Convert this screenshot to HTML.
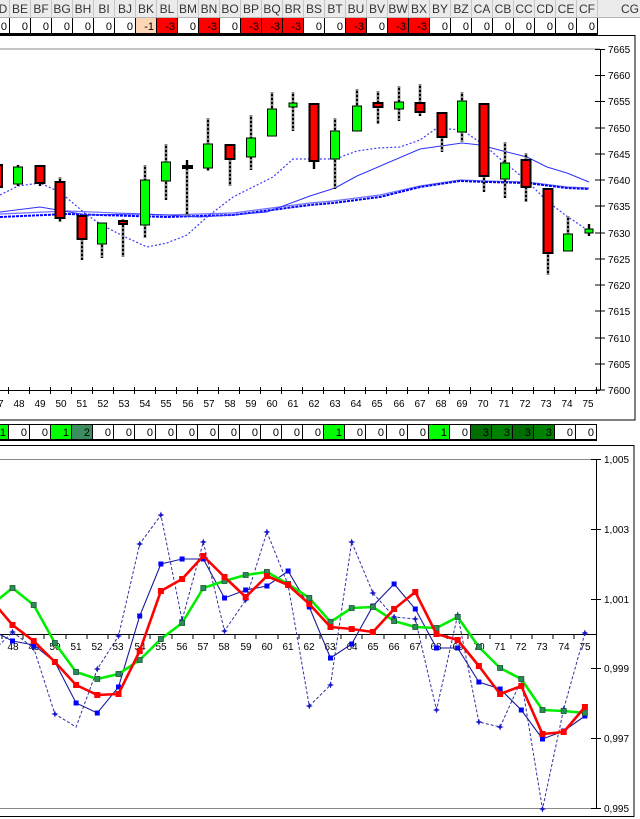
<!DOCTYPE html>
<html><head><meta charset="utf-8"><style>
html,body{margin:0;padding:0;background:#fff;width:640px;height:819px;overflow:hidden}
svg{display:block}
text{font-family:"Liberation Sans",Arial,sans-serif}
.h{font-size:12px;fill:#333;text-anchor:middle}
.v{font-size:11px;fill:#000;text-anchor:end}
.ax{font-size:10px;fill:#000}
.xl{font-size:10px;fill:#000;text-anchor:middle}
.w{stroke:#000;stroke-width:2.4}
.wd{stroke:#fff;stroke-width:1;stroke-dasharray:2 2}
.g{fill:#00ff00;stroke:#000;stroke-width:1}
.r{fill:#ff0000;stroke:#000;stroke-width:2}
.k{fill:#000}
</style></head><body>
<svg width="640" height="819" viewBox="0 0 640 819" xmlns="http://www.w3.org/2000/svg">
<!-- header row -->
<rect x="0" y="0" width="640" height="18" fill="#ebebeb"/>
<line x1="0" y1="17.5" x2="640" y2="17.5" stroke="#b4b4b4"/>
<g stroke="#c6c6c6">
<line x1="9.5" y1="0" x2="9.5" y2="18"/><line x1="30.5" y1="0" x2="30.5" y2="18"/><line x1="51.5" y1="0" x2="51.5" y2="18"/><line x1="72.5" y1="0" x2="72.5" y2="18"/><line x1="93.5" y1="0" x2="93.5" y2="18"/><line x1="114.5" y1="0" x2="114.5" y2="18"/><line x1="135.5" y1="0" x2="135.5" y2="18"/><line x1="156.5" y1="0" x2="156.5" y2="18"/><line x1="177.5" y1="0" x2="177.5" y2="18"/><line x1="198.5" y1="0" x2="198.5" y2="18"/><line x1="219.5" y1="0" x2="219.5" y2="18"/><line x1="240.5" y1="0" x2="240.5" y2="18"/><line x1="261.5" y1="0" x2="261.5" y2="18"/><line x1="282.5" y1="0" x2="282.5" y2="18"/><line x1="303.5" y1="0" x2="303.5" y2="18"/><line x1="324.5" y1="0" x2="324.5" y2="18"/><line x1="345.5" y1="0" x2="345.5" y2="18"/><line x1="366.5" y1="0" x2="366.5" y2="18"/><line x1="387.5" y1="0" x2="387.5" y2="18"/><line x1="408.5" y1="0" x2="408.5" y2="18"/><line x1="429.5" y1="0" x2="429.5" y2="18"/><line x1="450.5" y1="0" x2="450.5" y2="18"/><line x1="471.5" y1="0" x2="471.5" y2="18"/><line x1="492.5" y1="0" x2="492.5" y2="18"/><line x1="513.5" y1="0" x2="513.5" y2="18"/><line x1="534.5" y1="0" x2="534.5" y2="18"/><line x1="555.5" y1="0" x2="555.5" y2="18"/><line x1="576.5" y1="0" x2="576.5" y2="18"/><line x1="597.5" y1="0" x2="597.5" y2="18"/>
</g>
<text class="h" x="3" y="13">D</text><text class="h" x="20" y="13">BE</text><text class="h" x="41" y="13">BF</text><text class="h" x="62" y="13">BG</text><text class="h" x="83" y="13">BH</text><text class="h" x="104" y="13">BI</text><text class="h" x="125" y="13">BJ</text><text class="h" x="146" y="13">BK</text><text class="h" x="167" y="13">BL</text><text class="h" x="188" y="13">BM</text><text class="h" x="209" y="13">BN</text><text class="h" x="230" y="13">BO</text><text class="h" x="251" y="13">BP</text><text class="h" x="272" y="13">BQ</text><text class="h" x="293" y="13">BR</text><text class="h" x="314" y="13">BS</text><text class="h" x="335" y="13">BT</text><text class="h" x="356" y="13">BU</text><text class="h" x="377" y="13">BV</text><text class="h" x="398" y="13">BW</text><text class="h" x="419" y="13">BX</text><text class="h" x="440" y="13">BY</text><text class="h" x="461" y="13">BZ</text><text class="h" x="482" y="13">CA</text><text class="h" x="503" y="13">CB</text><text class="h" x="524" y="13">CC</text><text class="h" x="545" y="13">CD</text><text class="h" x="566" y="13">CE</text><text class="h" x="587" y="13">CF</text><text class="h" x="630" y="13">CG</text>
<!-- value row 1 -->
<rect x="135" y="18" width="21" height="16" fill="#fcd5b4"/>
<g fill="#ff0000"><rect x="156" y="18" width="21" height="16"/><rect x="198" y="18" width="21" height="16"/><rect x="240" y="18" width="63" height="16"/><rect x="345" y="18" width="21" height="16"/><rect x="387" y="18" width="42" height="16"/></g>
<g stroke="#000"><line x1="9.5" y1="18" x2="9.5" y2="34"/><line x1="30.5" y1="18" x2="30.5" y2="34"/><line x1="51.5" y1="18" x2="51.5" y2="34"/><line x1="72.5" y1="18" x2="72.5" y2="34"/><line x1="93.5" y1="18" x2="93.5" y2="34"/><line x1="114.5" y1="18" x2="114.5" y2="34"/><line x1="135.5" y1="18" x2="135.5" y2="34"/><line x1="156.5" y1="18" x2="156.5" y2="34"/><line x1="177.5" y1="18" x2="177.5" y2="34"/><line x1="198.5" y1="18" x2="198.5" y2="34"/><line x1="219.5" y1="18" x2="219.5" y2="34"/><line x1="240.5" y1="18" x2="240.5" y2="34"/><line x1="261.5" y1="18" x2="261.5" y2="34"/><line x1="282.5" y1="18" x2="282.5" y2="34"/><line x1="303.5" y1="18" x2="303.5" y2="34"/><line x1="324.5" y1="18" x2="324.5" y2="34"/><line x1="345.5" y1="18" x2="345.5" y2="34"/><line x1="366.5" y1="18" x2="366.5" y2="34"/><line x1="387.5" y1="18" x2="387.5" y2="34"/><line x1="408.5" y1="18" x2="408.5" y2="34"/><line x1="429.5" y1="18" x2="429.5" y2="34"/><line x1="450.5" y1="18" x2="450.5" y2="34"/><line x1="471.5" y1="18" x2="471.5" y2="34"/><line x1="492.5" y1="18" x2="492.5" y2="34"/><line x1="513.5" y1="18" x2="513.5" y2="34"/><line x1="534.5" y1="18" x2="534.5" y2="34"/><line x1="555.5" y1="18" x2="555.5" y2="34"/><line x1="576.5" y1="18" x2="576.5" y2="34"/><line x1="597.5" y1="18" x2="597.5" y2="34"/></g>
<text class="v" x="7" y="30">0</text><text class="v" x="28" y="30">0</text><text class="v" x="49" y="30">0</text><text class="v" x="70" y="30">0</text><text class="v" x="91" y="30">0</text><text class="v" x="112" y="30">0</text><text class="v" x="133" y="30">0</text><text class="v" x="154" y="30">-1</text><text class="v" x="175" y="30">-3</text><text class="v" x="196" y="30">0</text><text class="v" x="217" y="30">-3</text><text class="v" x="238" y="30">0</text><text class="v" x="259" y="30">-3</text><text class="v" x="280" y="30">-3</text><text class="v" x="301" y="30">-3</text><text class="v" x="322" y="30">0</text><text class="v" x="343" y="30">0</text><text class="v" x="364" y="30">-3</text><text class="v" x="385" y="30">0</text><text class="v" x="406" y="30">-3</text><text class="v" x="427" y="30">-3</text><text class="v" x="448" y="30">0</text><text class="v" x="469" y="30">0</text><text class="v" x="490" y="30">0</text><text class="v" x="511" y="30">0</text><text class="v" x="532" y="30">0</text><text class="v" x="553" y="30">0</text><text class="v" x="574" y="30">0</text><text class="v" x="595" y="30">0</text>
<rect x="0" y="33" width="598" height="2.5" fill="#000"/>

<!-- chart 1 frame -->
<rect x="-2" y="35.5" width="637" height="384.5" fill="none" stroke="#000" stroke-width="1"/>
<line x1="0" y1="49" x2="600" y2="49" stroke="#888"/>
<line x1="600.5" y1="49" x2="600.5" y2="390" stroke="#000"/>
<line x1="0" y1="390.5" x2="600" y2="390.5" stroke="#000"/>
<g stroke="#000">
<line x1="595" y1="49.5" x2="605" y2="49.5"/><line x1="595" y1="75.5" x2="605" y2="75.5"/><line x1="595" y1="101.5" x2="605" y2="101.5"/><line x1="595" y1="128" x2="605" y2="128"/><line x1="595" y1="154" x2="605" y2="154"/><line x1="595" y1="180" x2="605" y2="180"/><line x1="595" y1="206" x2="605" y2="206"/><line x1="595" y1="233" x2="605" y2="233"/><line x1="595" y1="259" x2="605" y2="259"/><line x1="595" y1="285" x2="605" y2="285"/><line x1="595" y1="311" x2="605" y2="311"/><line x1="595" y1="338" x2="605" y2="338"/><line x1="595" y1="364" x2="605" y2="364"/><line x1="595" y1="390" x2="605" y2="390"/>
<line x1="8.5" y1="387" x2="8.5" y2="394"/><line x1="29.5" y1="387" x2="29.5" y2="394"/><line x1="50.5" y1="387" x2="50.5" y2="394"/><line x1="71.5" y1="387" x2="71.5" y2="394"/><line x1="92.5" y1="387" x2="92.5" y2="394"/><line x1="113.5" y1="387" x2="113.5" y2="394"/><line x1="134.5" y1="387" x2="134.5" y2="394"/><line x1="155.5" y1="387" x2="155.5" y2="394"/><line x1="176.5" y1="387" x2="176.5" y2="394"/><line x1="197.5" y1="387" x2="197.5" y2="394"/><line x1="218.5" y1="387" x2="218.5" y2="394"/><line x1="239.5" y1="387" x2="239.5" y2="394"/><line x1="260.5" y1="387" x2="260.5" y2="394"/><line x1="281.5" y1="387" x2="281.5" y2="394"/><line x1="302.5" y1="387" x2="302.5" y2="394"/><line x1="323.5" y1="387" x2="323.5" y2="394"/><line x1="344.5" y1="387" x2="344.5" y2="394"/><line x1="365.5" y1="387" x2="365.5" y2="394"/><line x1="386.5" y1="387" x2="386.5" y2="394"/><line x1="407.5" y1="387" x2="407.5" y2="394"/><line x1="428.5" y1="387" x2="428.5" y2="394"/><line x1="449.5" y1="387" x2="449.5" y2="394"/><line x1="470.5" y1="387" x2="470.5" y2="394"/><line x1="491.5" y1="387" x2="491.5" y2="394"/><line x1="512.5" y1="387" x2="512.5" y2="394"/><line x1="533.5" y1="387" x2="533.5" y2="394"/><line x1="554.5" y1="387" x2="554.5" y2="394"/><line x1="575.5" y1="387" x2="575.5" y2="394"/><line x1="596.5" y1="387" x2="596.5" y2="394"/>
</g>
<g class="ax"><text x="608" y="53">7665</text><text x="608" y="79">7660</text><text x="608" y="105">7655</text><text x="608" y="132">7650</text><text x="608" y="158">7645</text><text x="608" y="184">7640</text><text x="608" y="210">7635</text><text x="608" y="237">7630</text><text x="608" y="263">7625</text><text x="608" y="289">7620</text><text x="608" y="315">7615</text><text x="608" y="342">7610</text><text x="608" y="368">7605</text><text x="608" y="394">7600</text></g>
<g class="xl"><text x="-2" y="407">47</text><text x="19" y="407">48</text><text x="40" y="407">49</text><text x="61" y="407">50</text><text x="82" y="407">51</text><text x="103" y="407">52</text><text x="124" y="407">53</text><text x="145" y="407">54</text><text x="166" y="407">55</text><text x="188" y="407">56</text><text x="209" y="407">57</text><text x="230" y="407">58</text><text x="251" y="407">59</text><text x="272" y="407">60</text><text x="293" y="407">61</text><text x="314" y="407">62</text><text x="335" y="407">63</text><text x="356" y="407">64</text><text x="377" y="407">65</text><text x="399" y="407">66</text><text x="420" y="407">67</text><text x="441" y="407">68</text><text x="462" y="407">69</text><text x="483" y="407">70</text><text x="504" y="407">71</text><text x="525" y="407">72</text><text x="546" y="407">73</text><text x="567" y="407">74</text><text x="588" y="407">75</text></g>

<!-- MA lines -->
<polyline fill="none" stroke="#7070ff" stroke-width="1.2" points="0,214 67,211 167,215 233,213 310,203 333,201 380,195 420,186 460,180 487,181 527,182 567,187 589,188"/>
<polyline fill="none" stroke="#0000ff" stroke-width="2" stroke-dasharray="3 1" points="0,217 67,214 167,217 233,215 310,205 333,203 380,197 420,187 460,181 487,182 527,183 567,188 589,189"/>
<polyline fill="none" stroke="#3030ff" stroke-width="1" points="0,212 40,207 87,215 133,214 167,215 200,217 233,215 267,212 310,196 335,188 357,176 420,149 462,143 480,145 503,151 527,157 547,167 567,173 589,182"/>
<polyline fill="none" stroke="#3a3aff" stroke-width="1.2" stroke-dasharray="2 2" points="0,195 18,186 40,183 60,192 87,215 102,225 123,236 147,247 167,243 187,235 207,217 233,197 273,177 293,159 314,159 335,159 357,151 378,148 400,147 420,140 437,128 462,130 484,145 505,163 526,180 548,202 568,217 589,231"/>

<!-- candles -->
<g>
<rect class="r" x="-6" y="165" width="8" height="22"/>
<line class="w" x1="18" y1="165" x2="18" y2="186"/><rect class="g" x="13.5" y="167" width="9" height="17"/>
<line class="w" x1="40" y1="165" x2="40" y2="186"/><rect class="r" x="35.5" y="166" width="9" height="17"/>
<line class="w" x1="60" y1="177" x2="60" y2="222"/><line class="wd" x1="60" y1="177" x2="60" y2="222"/><rect class="r" x="55.5" y="182" width="9" height="36"/>
<line class="w" x1="82" y1="216" x2="82" y2="260"/><line class="wd" x1="82" y1="216" x2="82" y2="260"/><rect class="r" x="77.5" y="216" width="9" height="23"/>
<line class="w" x1="102" y1="223" x2="102" y2="258"/><line class="wd" x1="102" y1="223" x2="102" y2="258"/><rect class="g" x="97.5" y="223" width="9" height="21"/>
<line class="w" x1="123" y1="219" x2="123" y2="257"/><line class="wd" x1="123" y1="219" x2="123" y2="257"/><rect class="r" x="119" y="221" width="8" height="3"/>
<line class="w" x1="145" y1="165" x2="145" y2="238"/><line class="wd" x1="145" y1="165" x2="145" y2="238"/><rect class="g" x="140.5" y="180" width="9" height="45"/>
<line class="w" x1="166" y1="144" x2="166" y2="200"/><line class="wd" x1="166" y1="144" x2="166" y2="200"/><rect class="g" x="161.5" y="162" width="9" height="19"/>
<line class="w" x1="187" y1="160" x2="187" y2="216"/><line class="wd" x1="187" y1="170" x2="187" y2="216"/><rect class="k" x="182" y="165" width="11" height="4"/>
<line class="w" x1="208" y1="118" x2="208" y2="171"/><line class="wd" x1="208" y1="118" x2="208" y2="171"/><rect class="g" x="203.5" y="144" width="9" height="24"/>
<line class="w" x1="230" y1="144" x2="230" y2="186"/><line class="wd" x1="230" y1="160" x2="230" y2="186"/><rect class="r" x="225.5" y="145" width="9" height="14"/>
<line class="w" x1="251" y1="115" x2="251" y2="170"/><line class="wd" x1="251" y1="115" x2="251" y2="170"/><rect class="g" x="246.5" y="138" width="9" height="19"/>
<line class="w" x1="272" y1="92" x2="272" y2="136"/><line class="wd" x1="272" y1="92" x2="272" y2="110"/><rect class="g" x="267.5" y="109" width="9" height="27"/>
<line class="w" x1="293" y1="92" x2="293" y2="131"/><line class="wd" x1="293" y1="92" x2="293" y2="131"/><rect class="g" x="289" y="103" width="8" height="4"/>
<line class="w" x1="314" y1="103" x2="314" y2="169"/><rect class="r" x="309.5" y="104" width="9" height="57"/>
<line class="w" x1="335" y1="118" x2="335" y2="189"/><line class="wd" x1="335" y1="118" x2="335" y2="189"/><rect class="g" x="330.5" y="131" width="9" height="28"/>
<line class="w" x1="357" y1="89" x2="357" y2="131"/><line class="wd" x1="357" y1="89" x2="357" y2="131"/><rect class="g" x="352.5" y="106" width="9" height="25"/>
<line class="w" x1="378" y1="91" x2="378" y2="124"/><line class="wd" x1="378" y1="91" x2="378" y2="124"/><rect class="r" x="373.5" y="103" width="9" height="4"/>
<line class="w" x1="399" y1="86" x2="399" y2="121"/><line class="wd" x1="399" y1="86" x2="399" y2="121"/><rect class="g" x="394.5" y="102" width="9" height="7"/>
<line class="w" x1="420" y1="84" x2="420" y2="116"/><line class="wd" x1="420" y1="84" x2="420" y2="116"/><rect class="r" x="415.5" y="103" width="9" height="9"/>
<line class="w" x1="442" y1="113" x2="442" y2="152"/><line class="wd" x1="442" y1="113" x2="442" y2="152"/><rect class="r" x="437.5" y="113" width="9" height="24"/>
<line class="w" x1="462" y1="92" x2="462" y2="142"/><line class="wd" x1="462" y1="92" x2="462" y2="142"/><rect class="g" x="457.5" y="101" width="9" height="31"/>
<line class="w" x1="484" y1="104" x2="484" y2="192"/><line class="wd" x1="484" y1="104" x2="484" y2="192"/><rect class="r" x="479.5" y="104" width="9" height="72"/>
<line class="w" x1="505" y1="142" x2="505" y2="198"/><line class="wd" x1="505" y1="142" x2="505" y2="198"/><rect class="g" x="500.5" y="163" width="9" height="16"/>
<line class="w" x1="526" y1="153" x2="526" y2="202"/><line class="wd" x1="526" y1="153" x2="526" y2="202"/><rect class="r" x="521.5" y="160" width="9" height="27"/>
<line class="w" x1="548" y1="189" x2="548" y2="275"/><line class="wd" x1="548" y1="189" x2="548" y2="275"/><rect class="r" x="543.5" y="189" width="9" height="64"/>
<line class="w" x1="568" y1="216" x2="568" y2="251"/><line class="wd" x1="568" y1="216" x2="568" y2="251"/><rect class="g" x="563.5" y="234" width="9" height="17"/>
<line class="w" x1="589" y1="224" x2="589" y2="236"/><rect class="g" x="585" y="229" width="8" height="4"/>
</g>

<!-- value row 2 -->
<rect x="0" y="424" width="8" height="16" fill="#00ff00"/>
<rect x="50" y="424" width="21" height="16" fill="#00ff00"/>
<rect x="71" y="424" width="21" height="16" fill="#3b8c5e"/>
<rect x="323" y="424" width="21" height="16" fill="#00ff00"/>
<rect x="428" y="424" width="21" height="16" fill="#00ff00"/>
<rect x="470" y="424" width="84" height="16" fill="#008000"/>
<rect x="470" y="424" width="21" height="16" fill="#006e00"/>
<rect x="512" y="424" width="21" height="16" fill="#006e00"/>
<rect x="-1" y="424.5" width="597.5" height="15.5" fill="none" stroke="#000"/>
<rect x="0" y="439" width="597" height="2" fill="#000"/>
<g stroke="#000"><line x1="8.5" y1="424" x2="8.5" y2="440"/><line x1="29.5" y1="424" x2="29.5" y2="440"/><line x1="50.5" y1="424" x2="50.5" y2="440"/><line x1="71.5" y1="424" x2="71.5" y2="440"/><line x1="92.5" y1="424" x2="92.5" y2="440"/><line x1="113.5" y1="424" x2="113.5" y2="440"/><line x1="134.5" y1="424" x2="134.5" y2="440"/><line x1="155.5" y1="424" x2="155.5" y2="440"/><line x1="176.5" y1="424" x2="176.5" y2="440"/><line x1="197.5" y1="424" x2="197.5" y2="440"/><line x1="218.5" y1="424" x2="218.5" y2="440"/><line x1="239.5" y1="424" x2="239.5" y2="440"/><line x1="260.5" y1="424" x2="260.5" y2="440"/><line x1="281.5" y1="424" x2="281.5" y2="440"/><line x1="302.5" y1="424" x2="302.5" y2="440"/><line x1="323.5" y1="424" x2="323.5" y2="440"/><line x1="344.5" y1="424" x2="344.5" y2="440"/><line x1="365.5" y1="424" x2="365.5" y2="440"/><line x1="386.5" y1="424" x2="386.5" y2="440"/><line x1="407.5" y1="424" x2="407.5" y2="440"/><line x1="428.5" y1="424" x2="428.5" y2="440"/><line x1="449.5" y1="424" x2="449.5" y2="440"/><line x1="470.5" y1="424" x2="470.5" y2="440"/><line x1="491.5" y1="424" x2="491.5" y2="440"/><line x1="512.5" y1="424" x2="512.5" y2="440"/><line x1="533.5" y1="424" x2="533.5" y2="440"/><line x1="554.5" y1="424" x2="554.5" y2="440"/><line x1="575.5" y1="424" x2="575.5" y2="440"/></g>
<g class="v"><text x="6" y="436">1</text><text x="27" y="436">0</text><text x="48" y="436">0</text><text x="69" y="436">1</text><text x="90" y="436">2</text><text x="111" y="436">0</text><text x="132" y="436">0</text><text x="153" y="436">0</text><text x="174" y="436">0</text><text x="195" y="436">0</text><text x="216" y="436">0</text><text x="237" y="436">0</text><text x="258" y="436">0</text><text x="279" y="436">0</text><text x="300" y="436">0</text><text x="321" y="436">0</text><text x="342" y="436">1</text><text x="363" y="436">0</text><text x="384" y="436">0</text><text x="405" y="436">0</text><text x="426" y="436">0</text><text x="447" y="436">1</text><text x="468" y="436">0</text><text x="489" y="436">3</text><text x="510" y="436">3</text><text x="531" y="436">3</text><text x="552" y="436">3</text><text x="573" y="436">0</text><text x="594" y="436">0</text></g>

<!-- chart 2 frame -->
<rect x="-2" y="445.5" width="636" height="371" fill="none" stroke="#000"/>
<line x1="0" y1="459.5" x2="596" y2="459.5" stroke="#888"/>
<line x1="0" y1="808.5" x2="596" y2="808.5" stroke="#888"/>
<line x1="596.5" y1="459" x2="596.5" y2="809" stroke="#000"/>
<g stroke="#000"><line x1="591" y1="459.5" x2="601" y2="459.5"/><line x1="591" y1="529.5" x2="601" y2="529.5"/><line x1="591" y1="599.5" x2="601" y2="599.5"/><line x1="591" y1="668.5" x2="601" y2="668.5"/><line x1="591" y1="738.5" x2="601" y2="738.5"/><line x1="591" y1="808.5" x2="601" y2="808.5"/></g>
<g class="ax"><text x="604" y="463">1,005</text><text x="604" y="533">1,003</text><text x="604" y="603">1,001</text><text x="604" y="672">0,999</text><text x="604" y="742">0,997</text><text x="604" y="812">0,995</text></g>
<line x1="0" y1="634.5" x2="596" y2="634.5" stroke="#000"/>
<g stroke="#000"><line x1="2" y1="634" x2="2" y2="639"/><line x1="23" y1="634" x2="23" y2="639"/><line x1="44" y1="634" x2="44" y2="639"/><line x1="66" y1="634" x2="66" y2="639"/><line x1="87" y1="634" x2="87" y2="639"/><line x1="108" y1="634" x2="108" y2="639"/><line x1="129" y1="634" x2="129" y2="639"/><line x1="150" y1="634" x2="150" y2="639"/><line x1="172" y1="634" x2="172" y2="639"/><line x1="193" y1="634" x2="193" y2="639"/><line x1="214" y1="634" x2="214" y2="639"/><line x1="235" y1="634" x2="235" y2="639"/><line x1="256" y1="634" x2="256" y2="639"/><line x1="278" y1="634" x2="278" y2="639"/><line x1="299" y1="634" x2="299" y2="639"/><line x1="320" y1="634" x2="320" y2="639"/><line x1="341" y1="634" x2="341" y2="639"/><line x1="362" y1="634" x2="362" y2="639"/><line x1="384" y1="634" x2="384" y2="639"/><line x1="405" y1="634" x2="405" y2="639"/><line x1="426" y1="634" x2="426" y2="639"/><line x1="447" y1="634" x2="447" y2="639"/><line x1="468" y1="634" x2="468" y2="639"/><line x1="490" y1="634" x2="490" y2="639"/><line x1="511" y1="634" x2="511" y2="639"/><line x1="532" y1="634" x2="532" y2="639"/><line x1="553" y1="634" x2="553" y2="639"/><line x1="574" y1="634" x2="574" y2="639"/></g>
<g class="xl"><text x="-8" y="650">47</text><text x="13" y="650">48</text><text x="34" y="650">49</text><text x="55" y="650">50</text><text x="76" y="650">51</text><text x="97" y="650">52</text><text x="118" y="650">53</text><text x="140" y="650">54</text><text x="161" y="650">55</text><text x="182" y="650">56</text><text x="203" y="650">57</text><text x="224" y="650">58</text><text x="246" y="650">59</text><text x="267" y="650">60</text><text x="288" y="650">61</text><text x="309" y="650">62</text><text x="330" y="650">63</text><text x="352" y="650">64</text><text x="373" y="650">65</text><text x="394" y="650">66</text><text x="415" y="650">67</text><text x="436" y="650">68</text><text x="458" y="650">69</text><text x="479" y="650">70</text><text x="500" y="650">71</text><text x="521" y="650">72</text><text x="542" y="650">73</text><text x="564" y="650">74</text><text x="585" y="650">75</text></g>

<defs>
<g id="st"><path d="M0,-3.5 L1,-1 L3.5,0 L1,1 L0,3.5 L-1,1 L-3.5,0 L-1,-1 Z" fill="#1818c8"/></g>
<rect id="sb" x="-2.5" y="-2.5" width="5" height="5" fill="#0000ff"/>
<rect id="sr" x="-3" y="-3" width="6" height="6" fill="#ff0000"/>
<rect id="sg" x="-2.5" y="-2.5" width="5" height="5" fill="#2e8b57" stroke="#145a30" stroke-width="0.8"/>
</defs>

<!-- dashed blue with stars -->
<polyline fill="none" stroke="#3030a0" stroke-width="1" stroke-dasharray="3 2" points="-8.7,653 12.5,632 33.7,648 54.9,714 76.1,727 97.3,669 118.5,636 139.7,544 160.9,515 182.1,620 203.3,542 224.5,631 245.7,600 266.9,532 288.1,585 309.3,706 330.5,685 351.7,542 372.9,593 394.1,617 415.3,619 436.5,710 457.7,615 478.9,722 500.1,727 521.3,680 542.5,809 563.7,709 584.9,633"/>
<g><use href="#st" x="12.5" y="632"/><use href="#st" x="33.7" y="648"/><use href="#st" x="54.9" y="714"/><use href="#st" x="97.3" y="669"/><use href="#st" x="118.5" y="636"/><use href="#st" x="139.7" y="544"/><use href="#st" x="160.9" y="515"/><use href="#st" x="182.1" y="620"/><use href="#st" x="203.3" y="542"/><use href="#st" x="224.5" y="631"/><use href="#st" x="245.7" y="600"/><use href="#st" x="266.9" y="532"/><use href="#st" x="288.1" y="585"/><use href="#st" x="309.3" y="706"/><use href="#st" x="330.5" y="685"/><use href="#st" x="351.7" y="542"/><use href="#st" x="372.9" y="593"/><use href="#st" x="394.1" y="617"/><use href="#st" x="415.3" y="619"/><use href="#st" x="436.5" y="710"/><use href="#st" x="457.7" y="615"/><use href="#st" x="478.9" y="722"/><use href="#st" x="500.1" y="727"/><use href="#st" x="521.3" y="680"/><use href="#st" x="542.5" y="809"/><use href="#st" x="563.7" y="709"/><use href="#st" x="584.9" y="633"/></g>

<!-- solid navy/blue -->
<polyline fill="none" stroke="#1a1a9a" stroke-width="1.1" points="-8.7,630 12.5,641 33.7,645 54.9,662 76.1,703 97.3,713 118.5,687 139.7,616 160.9,564 182.1,559 203.3,559 224.5,598 245.7,590 266.9,586 288.1,571 309.3,607 330.5,658 351.7,644 372.9,606 394.1,584 415.3,609 436.5,648 457.7,648 478.9,682 500.1,689 521.3,710 542.5,739 563.7,731 584.9,716"/>
<g><use href="#sb" x="12.5" y="641"/><use href="#sb" x="33.7" y="645"/><use href="#sb" x="54.9" y="662"/><use href="#sb" x="76.1" y="703"/><use href="#sb" x="97.3" y="713"/><use href="#sb" x="118.5" y="687"/><use href="#sb" x="139.7" y="616"/><use href="#sb" x="160.9" y="564"/><use href="#sb" x="182.1" y="559"/><use href="#sb" x="203.3" y="559"/><use href="#sb" x="224.5" y="598"/><use href="#sb" x="245.7" y="590"/><use href="#sb" x="266.9" y="586"/><use href="#sb" x="288.1" y="571"/><use href="#sb" x="309.3" y="607"/><use href="#sb" x="330.5" y="658"/><use href="#sb" x="351.7" y="644"/><use href="#sb" x="372.9" y="606"/><use href="#sb" x="394.1" y="584"/><use href="#sb" x="415.3" y="609"/><use href="#sb" x="436.5" y="648"/><use href="#sb" x="457.7" y="648"/><use href="#sb" x="478.9" y="682"/><use href="#sb" x="500.1" y="689"/><use href="#sb" x="521.3" y="710"/><use href="#sb" x="542.5" y="739"/><use href="#sb" x="563.7" y="731"/><use href="#sb" x="584.9" y="716"/></g>

<!-- green -->
<polyline fill="none" stroke="#00ee00" stroke-width="2.6" stroke-linejoin="round" points="-8.7,605 12.5,588 33.7,605 54.9,643 76.1,672 97.3,679 118.5,674 139.7,660 160.9,639 182.1,623 203.3,588 224.5,581 245.7,575 266.9,572 288.1,584 309.3,598 330.5,622 351.7,608 372.9,607 394.1,621 415.3,627 436.5,628 457.7,617 478.9,647 500.1,668 521.3,679 542.5,710 563.7,711 584.9,713"/>
<g><use href="#sg" x="12.5" y="588"/><use href="#sg" x="33.7" y="605"/><use href="#sg" x="54.9" y="643"/><use href="#sg" x="76.1" y="672"/><use href="#sg" x="97.3" y="679"/><use href="#sg" x="118.5" y="674"/><use href="#sg" x="139.7" y="660"/><use href="#sg" x="160.9" y="639"/><use href="#sg" x="182.1" y="623"/><use href="#sg" x="203.3" y="588"/><use href="#sg" x="224.5" y="581"/><use href="#sg" x="245.7" y="575"/><use href="#sg" x="266.9" y="572"/><use href="#sg" x="288.1" y="584"/><use href="#sg" x="309.3" y="598"/><use href="#sg" x="330.5" y="622"/><use href="#sg" x="351.7" y="608"/><use href="#sg" x="372.9" y="607"/><use href="#sg" x="394.1" y="621"/><use href="#sg" x="415.3" y="627"/><use href="#sg" x="436.5" y="628"/><use href="#sg" x="457.7" y="617"/><use href="#sg" x="478.9" y="647"/><use href="#sg" x="500.1" y="668"/><use href="#sg" x="521.3" y="679"/><use href="#sg" x="542.5" y="710"/><use href="#sg" x="563.7" y="711"/><use href="#sg" x="584.9" y="713"/></g>

<!-- red -->
<polyline fill="none" stroke="#ff0000" stroke-width="2.6" stroke-linejoin="round" points="-8.7,600 12.5,625 33.7,641 54.9,662 76.1,685 97.3,695 118.5,694 139.7,651 160.9,591 182.1,579 203.3,556 224.5,577 245.7,597 266.9,576 288.1,585 309.3,604 330.5,627 351.7,629 372.9,632 394.1,609 415.3,592 436.5,634 457.7,640 478.9,666 500.1,694 521.3,686 542.5,734 563.7,732 584.9,707"/>
<g><use href="#sr" x="12.5" y="625"/><use href="#sr" x="33.7" y="641"/><use href="#sr" x="54.9" y="662"/><use href="#sr" x="76.1" y="685"/><use href="#sr" x="97.3" y="695"/><use href="#sr" x="118.5" y="694"/><use href="#sr" x="139.7" y="651"/><use href="#sr" x="160.9" y="591"/><use href="#sr" x="182.1" y="579"/><use href="#sr" x="203.3" y="556"/><use href="#sr" x="224.5" y="577"/><use href="#sr" x="245.7" y="597"/><use href="#sr" x="266.9" y="576"/><use href="#sr" x="288.1" y="585"/><use href="#sr" x="309.3" y="604"/><use href="#sr" x="330.5" y="627"/><use href="#sr" x="351.7" y="629"/><use href="#sr" x="372.9" y="632"/><use href="#sr" x="394.1" y="609"/><use href="#sr" x="415.3" y="592"/><use href="#sr" x="436.5" y="634"/><use href="#sr" x="457.7" y="640"/><use href="#sr" x="478.9" y="666"/><use href="#sr" x="500.1" y="694"/><use href="#sr" x="521.3" y="686"/><use href="#sr" x="542.5" y="734"/><use href="#sr" x="563.7" y="732"/><use href="#sr" x="584.9" y="707"/></g>
</svg>
</body></html>
